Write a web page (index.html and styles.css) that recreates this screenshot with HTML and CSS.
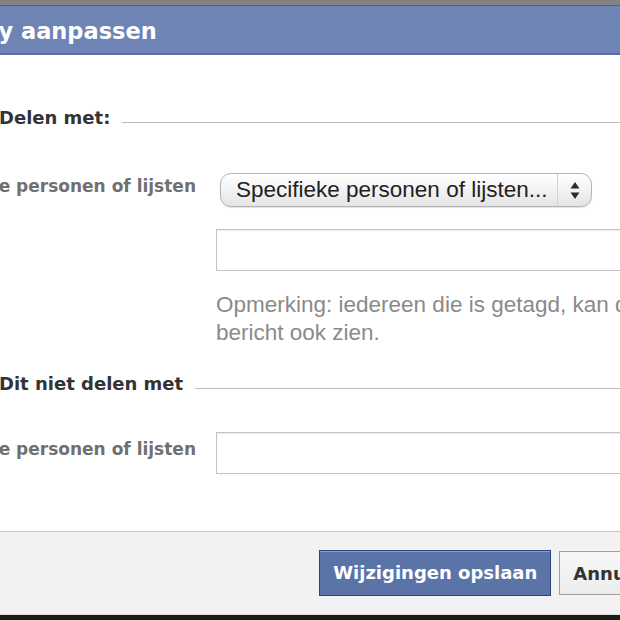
FILE: index.html
```html
<!DOCTYPE html>
<html>
<head>
  <title>Privacy aanpassen</title>
  <link rel="stylesheet" href="styles.css">
</head>
<body>
  <div class="overlay-top"></div>

  <div class="dialog">
    <div class="dialog-title">Privacy aanpassen</div>

    <div class="dialog-body">
      <div class="section-head">
        <span>Delen met:</span>
        <div class="rule"></div>
      </div>

      <div class="form-grid">
        <div class="field-label">Deze personen of lijsten</div>
        <div class="select-box">
          <span class="select-text">Specifieke personen of lijsten...</span>
          <span class="select-arrows">
            <svg width="10" height="17" viewBox="0 0 10 17">
              <path d="M5 0 L9.5 6.5 H0.5 Z" fill="#2b2b2b"/>
              <path d="M5 17 L9.5 10.5 H0.5 Z" fill="#2b2b2b"/>
            </svg>
          </span>
        </div>

        <div class="text-input first-input"></div>

        <div class="note">Opmerking: iedereen die is getagd, kan dit bericht ook zien.</div>
      </div>

      <div class="section-head second-head">
        <span>Dit niet delen met</span>
        <div class="rule"></div>
      </div>

      <div class="form-grid exclude-grid">
        <div class="field-label">Deze personen of lijsten</div>
        <div class="text-input"></div>
      </div>
    </div>

    <div class="dialog-footer">
      <button class="btn btn-primary">Wijzigingen opslaan</button>
      <button class="btn btn-cancel">Annuleren</button>
    </div>
  </div>
</body>
</html>
```

FILE: styles.css
```css
body {
  margin: 0;
  width: 620px;
  height: 620px;
  overflow: hidden;
  background-color: #1c1c1c;
  font-family: 'DejaVu Sans', sans-serif;
}

.overlay-top {
  height: 5px;
  background-color: #838383;
}

.dialog {
  width: 788px;
  margin-left: -88px;
  background-color: #fff;
}

.dialog-title {
  background-color: #6d84b4;
  border-top: 1px solid #4a5e9c;
  border-bottom: 2px solid #5a6ca8;
  height: 44px;
  padding: 3px 0 0 8px;
  line-height: 44px;
  color: #fff;
  font-size: 22.5px;
  font-weight: bold;
  white-space: nowrap;
}

.dialog-body {
  padding: 51px 0 57px 88px;
}

.section-head {
  display: flex;
  align-items: center;
  height: 24px;
  line-height: 24px;
  font-size: 18px;
  font-weight: bold;
  color: #333;
  white-space: nowrap;
}

.section-head span {
  margin-left: -1px;
}

.section-head .rule {
  flex: 1;
  margin-left: 12px;
  margin-top: 9px;
  border-top: 1px solid #bdbdbd;
}

.second-head {
  margin-top: 25px;
}

.form-grid {
  display: grid;
  grid-template-columns: 196px 1fr;
  column-gap: 20px;
  align-items: center;
  margin-top: 43px;
}

.exclude-grid {
  margin-top: 36px;
}

.field-label {
  display: flex;
  justify-content: flex-end;
  margin-bottom: 8px;
  white-space: nowrap;
  font-size: 17px;
  font-weight: bold;
  color: #707070;
}

/* mac style popup button */
.select-box {
  display: flex;
  align-items: center;
  width: 370px;
  height: 32px;
  margin-left: 4px;
  border: 1px solid #b4b4b4;
  border-radius: 11px;
  background: linear-gradient(#ffffff, #f3f3f3 50%, #e4e4e4);
  box-shadow: 0 1px 1px rgba(0, 0, 0, 0.12);
}

.select-text {
  flex: 1;
  padding-left: 15px;
  font-family: 'Liberation Sans', Arial, sans-serif;
  font-size: 22.5px;
  color: #222;
  white-space: nowrap;
}

.select-arrows {
  display: flex;
  align-items: center;
  justify-content: center;
  width: 33px;
  height: 100%;
  border-left: 1px solid #d2d2d2;
}

.select-arrows svg {
  display: block;
}

.text-input {
  height: 40px;
  border: 1px solid #c3c3cc;
  box-shadow: inset 0 1px 1px rgba(0, 0, 0, 0.08);
  background-color: #fff;
}

.first-input {
  grid-column: 2;
  margin-top: 22px;
}

.note {
  grid-column: 2;
  margin-top: 20px;
  font-family: 'Liberation Sans', Arial, sans-serif;
  font-size: 22.5px;
  line-height: 28px;
  color: #8a8a8a;
  width: 450px;
}

.dialog-footer {
  display: flex;
  justify-content: flex-end;
  gap: 8px;
  padding: 18px 8px 18px 0;
  background-color: #f2f2f2;
  border-top: 1px solid #c8c8c8;
  border-bottom: 1px solid #dcdcdc;
}

.btn {
  height: 46px;
  padding: 0 13px;
  font-family: 'DejaVu Sans', sans-serif;
  font-size: 18px;
  font-weight: bold;
  line-height: 44px;
  cursor: pointer;
}

.btn-primary {
  background-color: #5b74a8;
  border: 1px solid #29447e;
  color: #fff;
  box-shadow: inset 0 1px 0 #8a9cc2;
}

.btn-cancel {
  height: 44px;
  margin-top: 1px;
  background: linear-gradient(#f8f8f8, #ececec);
  border: 1px solid #a0a0a0;
  color: #333;
}
```
